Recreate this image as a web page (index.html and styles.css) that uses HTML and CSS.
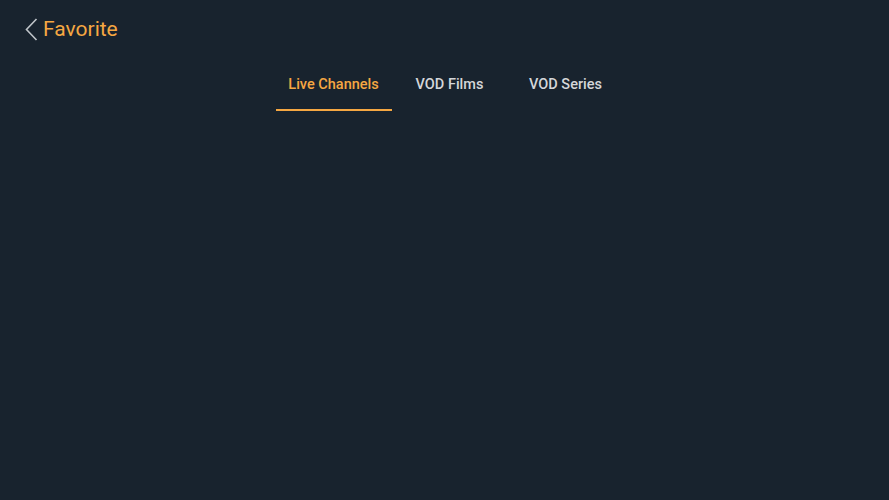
FILE: index.html
```html
<!DOCTYPE html>
<html lang="en">
<head>
<meta charset="UTF-8">
<meta name="viewport" content="width=device-width, initial-scale=1.0">
<title>Favorite</title>
<link rel="stylesheet" href="styles.css">
</head>
<body>

<div class="header">
  <svg class="back" width="13" height="23" viewBox="0 0 13 23">
    <path d="M11.5 1 L1.5 11.5 L11.5 22" fill="none" stroke="#bfc4c9" stroke-width="1.6"/>
  </svg>
  <h1>Favorite</h1>
</div>

<div class="tabs">
  <div class="tab active">Live Channels</div>
  <div class="tab">VOD Films</div>
  <div class="tab">VOD Series</div>
</div>

<div class="content"></div>

</body>
</html>
```

FILE: styles.css
```css
html, body {
  margin: 0;
  padding: 0;
  height: 100%;
  font-family: Roboto, "Liberation Sans", sans-serif;
  background-color: #18232e;
}
.header {
  display: flex;
  align-items: center;
  height: 58px;
  padding-left: 25px;
}
.back {
  display: block;
}
.header h1 {
  margin: 0 0 0 5px;
  font-size: 21px;
  font-weight: 400;
  color: #f5a742;
}
.tabs {
  display: flex;
  justify-content: center;
  padding-left: 10px;
}
.tab {
  width: 116px;
  padding: 17px 0 14px;
  text-align: center;
  font-size: 14.5px;
  line-height: 20px;
  font-weight: 500;
  color: #d4d6d9;
  border-bottom: 2px solid transparent;
}
.tab.active {
  color: #f5a742;
  border-bottom-color: #f5a742;
}
```
